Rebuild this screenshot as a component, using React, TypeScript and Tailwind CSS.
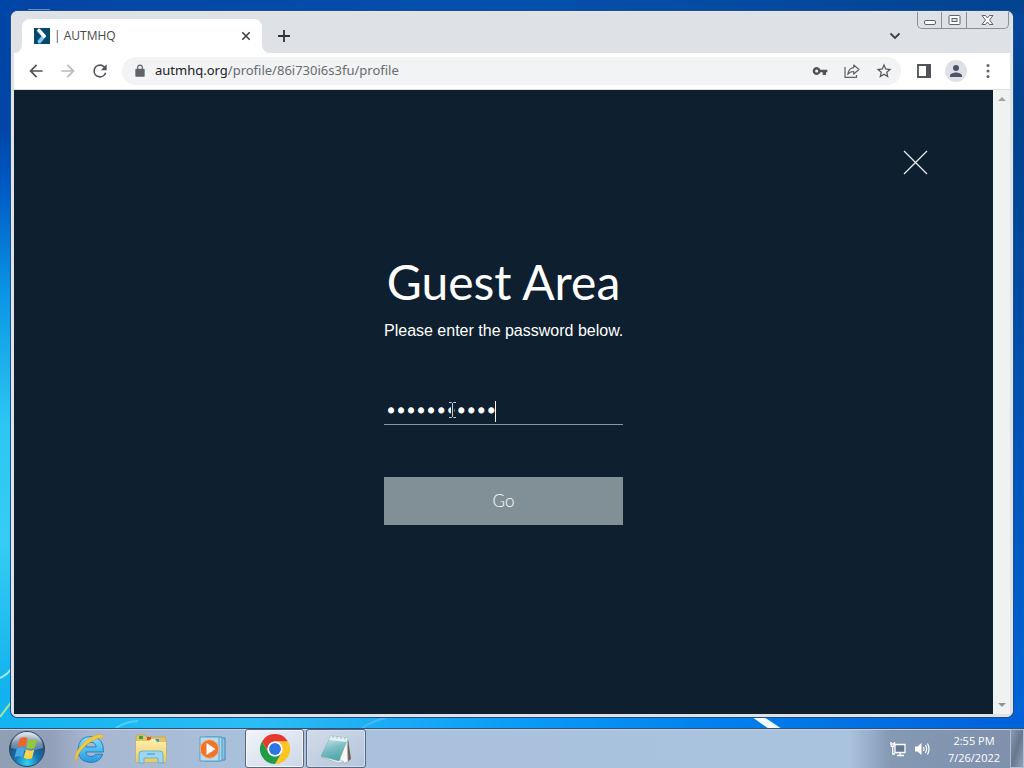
import React, { useState } from "react";

const ICON = "h-5 w-5 fill-[#5f6368]";

function Wallpaper() {
  return (
    <svg className="absolute inset-0 h-full w-full" viewBox="0 0 1024 768" preserveAspectRatio="none" aria-hidden="true">
      <defs>
        <linearGradient id="wpRight" x1="0" y1="0" x2="0" y2="1">
          <stop offset="0" stopColor="#0347a0" />
          <stop offset="0.15" stopColor="#02418a" />
          <stop offset="0.5" stopColor="#0051b0" />
          <stop offset="1" stopColor="#0067dc" />
        </linearGradient>
        <linearGradient id="wpLeft" x1="0" y1="0" x2="0" y2="1">
          <stop offset="0" stopColor="#0046a6" />
          <stop offset="0.17" stopColor="#0046a8" />
          <stop offset="0.24" stopColor="#0058c4" />
          <stop offset="0.38" stopColor="#0a94e4" />
          <stop offset="0.55" stopColor="#2cc6f4" />
          <stop offset="0.7" stopColor="#35cdf4" />
          <stop offset="0.9" stopColor="#12b2ee" />
        </linearGradient>
        <linearGradient id="wpTop" x1="0" y1="0" x2="1" y2="0">
          <stop offset="0" stopColor="#0344a4" />
          <stop offset="0.5" stopColor="#0450ae" />
          <stop offset="1" stopColor="#034390" />
        </linearGradient>
        <linearGradient id="wpBottom" x1="0" y1="0" x2="1" y2="0">
          <stop offset="0" stopColor="#12b4f0" />
          <stop offset="0.25" stopColor="#2cbcf4" />
          <stop offset="0.5" stopColor="#0c9cf6" />
          <stop offset="0.7" stopColor="#0080ee" />
          <stop offset="1" stopColor="#0060d8" />
        </linearGradient>
      </defs>
      <rect width="1024" height="768" fill="url(#wpRight)" />
      <rect width="1024" height="14" fill="url(#wpTop)" />
      <rect width="20" height="768" fill="url(#wpLeft)" />
      <rect y="712" width="1024" height="18" fill="url(#wpBottom)" />
      <path d="M0 678 Q7 675 12 668" stroke="#a6ecfa" strokeWidth="2" fill="none" />
      <path d="M0 717 L12 701" stroke="#a9e59a" strokeWidth="2" fill="none" />
      <path d="M116 728 Q124 722 138 721" stroke="#4fd0f6" strokeWidth="2" fill="none" />
      <path d="M362 728 Q372 721 386 718" stroke="#45b8f8" strokeWidth="2" fill="none" />
      <path d="M752 717h12l18 12h-13z" fill="#f4fbff" />
      <path d="M28 9.500h22" stroke="#5d8fd0" />
    </svg>
  );
}

function CaptionButtons() {
  const base = "flex h-4 items-center justify-center border-[#8b9097]";
  return (
    <div className="flex self-start rounded-b-[5px] border border-t-0 border-[#8b9097]">
      <button aria-label="Minimize" className={`${base} w-6 border-r`}>
        <svg width="14" height="14" viewBox="0 0 14 14"><rect x="1.500" y="7.500" width="11" height="4" rx="1.500" fill="#fff" stroke="#5d626b" /></svg>
      </button>
      <button aria-label="Maximize" className={`${base} w-[25px] border-r`}>
        <svg width="13" height="12" viewBox="0 0 13 12"><rect x="1" y="1.500" width="11" height="9" rx="1" fill="#fff" stroke="#5d626b" /><rect x="4" y="4.500" width="5" height="3" fill="#dee1e6" stroke="#5d626b" /></svg>
      </button>
      <button aria-label="Close" className={`${base} w-[41px]`}>
        <svg width="13" height="12" viewBox="0 0 13 12"><path d="M1 1.500h3.500l2 2.500 2-2.500H12L8.500 6l3.500 4.500H8.500l-2-2.500-2 2.500H1L4.500 6z" fill="#fff" stroke="#5d626b" /></svg>
      </button>
    </div>
  );
}

function TabStrip() {
  return (
    <header className="flex h-[41px] items-end pl-2 pr-px">
      <div className="relative flex h-[34px] w-60 items-center rounded-t-lg bg-white pl-3 pr-[7px]">
        <svg className="absolute -left-2 bottom-0" width="8" height="8" viewBox="0 0 8 8"><path d="M8 0v8H0a8 8 0 0 0 8-8" fill="#fff" /></svg>
        <svg className="absolute -right-2 bottom-0" width="8" height="8" viewBox="0 0 8 8"><path d="M0 0v8h8a8 8 0 0 1-8-8" fill="#fff" /></svg>
        <svg width="16" height="16" viewBox="0 0 16 16" aria-hidden="true">
          <rect width="16" height="16" fill="#06496f" />
          <path d="M10 8 5.500 13.500" stroke="#82c4ec" strokeWidth="3.600" strokeLinecap="round" />
          <path d="M5 2.500 10 8" stroke="#fff" strokeWidth="3.600" strokeLinecap="round" />
        </svg>
        <span className="ml-1 flex-1 text-xs text-[#45494d]">| AUTMHQ</span>
        <button aria-label="Close tab" className="p-1">
          <svg width="10" height="10" viewBox="0 0 10 10"><path d="M1.300 1.300l7.400 7.400M8.700 1.300 1.300 8.700" stroke="#3c4043" strokeWidth="1.600" /></svg>
        </button>
      </div>
      <button aria-label="New tab" className="ml-4 flex h-[34px] items-center">
        <svg width="12" height="12" viewBox="0 0 12 12"><path d="M6 0v12M0 6h12" stroke="#303438" strokeWidth="1.800" /></svg>
      </button>
      <span className="flex-1" />
      <button aria-label="Search tabs" className="mr-4 flex h-[34px] items-center">
        <svg width="12" height="8" viewBox="0 0 12 8"><path d="M1.500 1.500 6 6l4.500-4.500" fill="none" stroke="#3c4043" strokeWidth="1.800" /></svg>
      </button>
      <div className="flex h-[41px] items-start"><CaptionButtons /></div>
    </header>
  );
}

function Toolbar() {
  return (
    <nav className="flex h-[37px] items-center border-b border-[#dcdee1] bg-white px-3">
      <button aria-label="Back"><svg className="h-5 w-5 fill-[#505458]" viewBox="0 0 24 24"><path d="M20 11H7.830l5.590-5.590L12 4l-8 8 8 8 1.410-1.410L7.830 13H20z" /></svg></button>
      <button aria-label="Forward" className="ml-3"><svg className="h-5 w-5 fill-[#b9bbbd]" viewBox="0 0 24 24"><path d="M12 4l-1.410 1.410L16.170 11H4v2h12.170l-5.580 5.590L12 20l8-8z" /></svg></button>
      <button aria-label="Reload" className="ml-3"><svg className="h-5 w-5 fill-[#505458]" viewBox="0 0 24 24"><path d="M17.650 6.350A7.960 7.960 0 0 0 12 4a8 8 0 1 0 7.730 10h-2.080A6 6 0 1 1 12 6c1.660 0 3.140.69 4.220 1.780L13 11h7V4z" /></svg></button>
      <div className="ml-3 flex h-7 flex-1 items-center rounded-full bg-[#f1f3f4] pl-[11px] pr-2">
        <svg className="h-3.5 w-3.5 fill-[#5f6368]" viewBox="0 0 24 24" aria-hidden="true"><path d="M18 8h-1V6A5 5 0 0 0 7 6v2H6a2 2 0 0 0-2 2v10c0 1.100.9 2 2 2h12a2 2 0 0 0 2-2V10a2 2 0 0 0-2-2M9 6a3 3 0 0 1 6 0v2H9z" /></svg>
        <span className="ml-2 flex-1 font-['Noto_Sans'] text-[13px] text-[#686c70]"><span className="text-[#202124]">autmhq.org</span>/profile/86i730i6s3fu/profile</span>
        <button aria-label="Passwords">
          <svg width="16" height="16" viewBox="0 0 24 24" className="fill-[#505458]"><path d="M12.650 10A6 6 0 1 0 12.650 14H16v4h5v-4h2v-4zM7 14.300a2.300 2.300 0 1 1 0-4.600 2.300 2.300 0 0 1 0 4.600" /></svg>
        </button>
        <button aria-label="Share this page" className="ml-4">
          <svg width="16" height="16" viewBox="0 0 16 16" fill="none" stroke="#5f6368" strokeWidth="1.200"><path d="M1 4v10.400h11.500V12" /><path d="M9.700 2 15 6.500 9.700 11V8.500C7 8.500 5 9.500 3.700 11.500 4.200 7.800 6 5 9.700 4.600z" strokeLinejoin="round" /></svg>
        </button>
        <button aria-label="Bookmark this tab" className="ml-[15px]">
          <svg width="18" height="18" viewBox="0 0 24 24" className="fill-[#505458]"><path d="M22 9.240l-7.190-.62L12 2 9.190 8.630 2 9.240l5.460 4.730L5.820 21 12 17.270 18.180 21l-1.630-7.030zM12 15.400l-3.760 2.270 1-4.280-3.320-2.880 4.380-.38L12 6.100l1.710 4.040 4.380.38-3.320 2.880 1 4.280z" /></svg>
        </button>
      </div>
      <button aria-label="Side panel" className="ml-4">
        <svg width="14" height="14" viewBox="0 0 14 14"><path d="M1 1h12v12H1z" fill="none" stroke="#505458" strokeWidth="1.800" /><path d="M9 0h5v14H9z" fill="#505458" /></svg>
      </button>
      <button aria-label="You" className="ml-3.5 flex h-[22px] w-[22px] items-center justify-center rounded-full bg-[#dfe1e6]">
        <svg width="18" height="18" viewBox="0 0 24 24" className="fill-[#4b5468]"><path d="M12 12a4 4 0 1 0 0-8 4 4 0 0 0 0 8m0 2c-2.670 0-8 1.340-8 4v2h16v-2c0-2.660-5.330-4-8-4" /></svg>
      </button>
      <button aria-label="Menu" className="ml-[11px]"><svg className={ICON} viewBox="0 0 24 24"><circle cx="12" cy="5.500" r="1.800" /><circle cx="12" cy="12" r="1.800" /><circle cx="12" cy="18.500" r="1.800" /></svg></button>
    </nav>
  );
}

function GuestArea() {
  const [password, setPassword] = useState("guest-entry");
  return (
    <main className="relative flex flex-1 flex-col items-center justify-center bg-[#0e202f] pb-[26px] text-white">
      <button aria-label="Close" className="absolute right-16 top-[59px] p-px">
        <svg width="25" height="25" viewBox="0 0 25 25"><path d="M1 1l23 23M24 1 1 24" stroke="#e8edf0" strokeWidth="1.200" /></svg>
      </button>
      <form className="flex w-[239px] flex-col" onSubmit={(e) => e.preventDefault()}>
        <h1 className="whitespace-nowrap text-center font-['Lato'] text-[48px] leading-[58px]">Guest Area</h1>
        <label htmlFor="password" className="mt-2.5 whitespace-nowrap text-center font-['Liberation_Sans'] text-base leading-5">Please enter the password below.</label>
        <div className="relative mt-14 flex border-b border-[#8b979e]">
          <input id="password" type="password" value={password} onChange={(e) => setPassword(e.target.value)} className="h-[27px] w-full bg-transparent px-0.5 font-['DejaVu_Sans'] text-[17px] text-white caret-transparent outline-none [-webkit-text-stroke:1px_white]" />
          <span className="absolute left-[111px] top-1 h-[21px] w-px bg-white" />
          <svg className="absolute left-16 top-[5px]" width="9" height="16" viewBox="0 0 9 16" aria-hidden="true"><path d="M4.500 1.500v13" fill="none" stroke="#0e202f" strokeWidth="3" /><path d="M1 .5h2.500l1 1 1-1H8M4.500 1.500v13M1 15.500h2.500l1-1 1 1H8" fill="none" stroke="#c9d0d5" /></svg>
        </div>
        <button type="submit" className="mt-[52px] h-12 bg-[#819096] font-['Lato'] text-[17px] font-light">Go</button>
      </form>
    </main>
  );
}

function ScrollBar() {
  return (
    <div className="flex w-[17px] flex-col items-center justify-between bg-[#f0f1f1] py-1.5" aria-hidden="true">
      <svg width="8" height="5" viewBox="0 0 8 5"><path d="M0 5l4-4 4 4z" fill="#a2a4a6" /></svg>
      <svg width="8" height="5" viewBox="0 0 8 5"><path d="M0 0l4 4 4-4z" fill="#929497" /></svg>
    </div>
  );
}

function StartOrb() {
  return (
    <svg width="38" height="38" viewBox="0 0 38 38" aria-hidden="true">
      <defs>
        <radialGradient id="orb" cx="0.5" cy="0.9" r="0.85"><stop offset="0" stopColor="#35d5f4" /><stop offset="0.4" stopColor="#1675b0" /><stop offset="0.8" stopColor="#244a70" /><stop offset="1" stopColor="#8aa3b8" /></radialGradient>
        <linearGradient id="orbGloss" x1="0" y1="0" x2="0" y2="1"><stop offset="0" stopColor="#fff" stopOpacity="0.75" /><stop offset="1" stopColor="#fff" stopOpacity="0.2" /></linearGradient>
      </defs>
      <circle cx="19" cy="19" r="17.500" fill="url(#orb)" stroke="#24486a" />
      <path d="M3 18a16 16 0 0 1 32 0q-16 5-32 0" fill="url(#orbGloss)" />
      <path d="M12 8.500q4-2.500 7.500-.3l-2.300 8.800q-4-2.200-8 .2z" fill="#ee6429" />
      <path d="M20.700 8.800q4 2.200 8.300.4l-2.400 8.800q-4.500 1.800-8.300-.5z" fill="#93c83e" />
      <path d="M8.800 18.800q4-2.200 8-.2l-2.300 8.600q-4-2-8 .3z" fill="#49a6e8" />
      <path d="M18 19.300q4 2.200 8.300.5L24 28.300q-4.500 1.800-8.300-.5z" fill="#ffd24a" />
    </svg>
  );
}

function ExplorerE() {
  return (
    <svg width="32" height="32" viewBox="0 0 32 32" aria-hidden="true">
      <defs><linearGradient id="ie" x1="0" y1="0" x2="0" y2="1"><stop offset="0" stopColor="#8edcfa" /><stop offset="0.5" stopColor="#4fbdf0" /><stop offset="1" stopColor="#2c96dc" /></linearGradient></defs>
      <path d="M30.500 19H12.800q.7 4.500 5.200 4.500 3.200 0 4.800-2.300h7Q27 29.500 17.800 29.500 5 29 5 16.500 5.500 3.500 17.800 3.500 31 4 30.500 19M12.800 14h10.400q-.7-4.700-5.200-4.700T12.800 14" fill="url(#ie)" stroke="#1f7cb8" strokeWidth="0.900" />
      <path d="M3.500 29C-2.500 23 12 3 27 1.500q4 .3 2.500 4.500-.5-2-4-1C14 8.500 3 20.500 3.500 29" fill="#f8c93a" stroke="#dba426" strokeWidth="0.500" />
    </svg>
  );
}

function FolderIcon() {
  return (
    <svg width="34" height="32" viewBox="0 0 34 32" aria-hidden="true">
      <defs><linearGradient id="fold" x1="0" y1="0" x2="0" y2="1"><stop offset="0" stopColor="#fff0ac" /><stop offset="1" stopColor="#e8cb66" /></linearGradient></defs>
      <path d="M2 4q0-2 2-2h7l2 2h17q2 0 2 2v23H2z" fill="#e3c468" stroke="#c5a445" strokeWidth="0.800" />
      <path d="M5 3h4v3H5z" fill="#38a53e" /><path d="M13 4h4v3h-4z" fill="#cf5034" /><path d="M21 6h4v3h-4z" fill="#3f98cf" />
      <path d="M2 8h13l2-2h4l2 3h9v20H2z" fill="url(#fold)" />
      <path d="M5 30V21q0-3 3-3h18q3 0 3 3v9h-5v-5H10v5z" fill="#9bd7f2" stroke="#5aa6cc" strokeWidth="0.800" />
      <path d="M13 21h8" stroke="#55acd6" strokeWidth="1.500" />
    </svg>
  );
}

function MediaIcon() {
  return (
    <svg width="30" height="28" viewBox="0 0 30 28" aria-hidden="true">
      <path d="M10 3h17v22H10z" fill="#8cc4e3" stroke="#4288b5" /><path d="M7 2h17v24H7z" fill="#a9d7ee" stroke="#4a96c4" /><path d="M2 2h19v24H2z" fill="#b6def2" stroke="#5a9fc8" />
      <circle cx="11.500" cy="14" r="9.300" fill="#ed762b" stroke="#f5b184" /><path d="M8.500 8l9 6-9 6z" fill="#fff" />
    </svg>
  );
}

function ChromeIcon() {
  return (
    <svg width="30" height="30" viewBox="0 0 48 48" aria-hidden="true">
      <path d="M24 12h20.800A24 24 0 0 0 3.200 12l10.400 18A12 12 0 0 1 24 12" fill="#e33b2e" />
      <path d="M34.400 30 24 48a24 24 0 0 0 20.800-36H24a12 12 0 0 1 10.400 18" fill="#fcc521" />
      <path d="M13.600 30 3.200 12A24 24 0 0 0 24 48l10.400-18a12 12 0 0 1-20.800 0" fill="#229b48" />
      <circle cx="24" cy="24" r="12" fill="#fff" /><circle cx="24" cy="24" r="9.500" fill="#2d74e4" />
    </svg>
  );
}

function NotepadIcon() {
  return (
    <svg width="32" height="30" viewBox="0 0 32 30" aria-hidden="true">
      <defs><linearGradient id="pad" x1="0.200" y1="0" x2="0.500" y2="1"><stop offset="0" stopColor="#d3eef0" /><stop offset="0.500" stopColor="#7dbfc4" /><stop offset="1" stopColor="#4ca3ab" /></linearGradient></defs>
      <path d="M28 5l3 20-5 4z" fill="#6c6258" />
      <path d="M27 4l1 24-4 1-6-3z" fill="#f7f7f3" stroke="#a0a9aa" strokeWidth="0.600" />
      <path d="M1 23l17 6 6-1-5-3z" fill="#eef2f2" stroke="#a0a9aa" strokeWidth="0.600" />
      <path d="M11 2l17 2-9 23L1 22z" fill="url(#pad)" stroke="#72aeb4" strokeWidth="0.600" />
      <path d="M11 2l17 2-1.500 4L9 6z" fill="#e2f1f2" />
      <path d="M13 2v2m4-1.500v2m4-1.500v2m4-1.500v2" stroke="#9fb2b6" />
    </svg>
  );
}

function Taskbar() {
  const app = "flex h-full items-center justify-center";
  return (
    <footer className="relative flex h-10 items-center border-t border-[#2c5378] bg-[linear-gradient(90deg,#909fb3_0px,#929fb9_50px,#a8b7d1_90px,#a9c1dc_260px,#a9c2dd_83%,#8598b4_87%,#7e90ab_100%)] shadow-[inset_0_1px_0_#c5d2e3]">
      <button aria-label="Start" className="ml-2"><StartOrb /></button>
      <button aria-label="Internet Explorer" className={`${app} ml-[13px] w-[60px]`}><ExplorerE /></button>
      <button aria-label="Windows Explorer" className={`${app} ml-0.5 w-[60px]`}><FolderIcon /></button>
      <button aria-label="Media Player" className={`${app} ml-0.5 w-[60px]`}><MediaIcon /></button>
      <button aria-label="Google Chrome" className={`${app} ml-0.5 w-[59px] rounded-[3px] border border-[#56677f] bg-linear-to-br from-[#f2f5fa] to-[#ccd7e7] shadow-[inset_0_0_0_1px_#f5f8fc]`}><ChromeIcon /></button>
      <button aria-label="Notepad" className={`${app} ml-0.5 w-[60px] rounded-[3px] border border-[#56677f] bg-linear-to-br from-[#d2dce9] to-[#b3c4dc] shadow-[inset_0_0_0_1px_#d5deeb]`}><NotepadIcon /></button>
      <span className="flex-1" />
      <div className="flex items-center gap-2">
        <svg width="16" height="16" viewBox="0 0 16 16" aria-label="Network"><path d="M5 3.500h10v8H5zM10 11.500V14M7 14.500h7" fill="#66788f" stroke="#fff" strokeWidth="1.300" /><path d="M1 1v3q0 1.500 1.500 1.500T4.500 4V1M1 3h4M2.700 5.500V13H5" fill="none" stroke="#fff" strokeWidth="1.300" /></svg>
        <svg width="16" height="16" viewBox="0 0 16 16" aria-label="Volume"><path d="M1 5.500h2.500L7.500 2v12l-4-3.500H1z" fill="#fff" /><path d="M9.500 6q1 2 0 4M11.500 4q2.200 4 0 8M13.500 2.500q3 5.500 0 11" fill="none" stroke="#fff" strokeWidth="1.200" /></svg>
      </div>
      <time className="ml-2 w-[72px] text-center text-[11px] leading-[17px] text-white">2:55 PM<br />7/26/2022</time>
      <button aria-label="Show desktop" className="h-full w-[14px] border border-[#b2bfcf] bg-linear-to-br from-[#8a99b0] via-[#66778f] to-[#93a2b6]" />
    </footer>
  );
}

export default function App() {
  return (
    <div className="relative flex min-h-screen flex-col overflow-hidden bg-[#0051b0] font-['Open_Sans',sans-serif]">
      <Wallpaper />
      <div className="relative flex flex-1 flex-col p-[11px]">
        <section className="flex flex-1 flex-col rounded-md border border-[#dfe4ee] bg-[#dee1e6] px-0.5 pb-0.5 shadow-[0_0_0_1px_#1b4f86]">
          <TabStrip />
          <Toolbar />
          <div className="flex flex-1">
            <GuestArea />
            <ScrollBar />
          </div>
        </section>
      </div>
      <Taskbar />
    </div>
  );
}
